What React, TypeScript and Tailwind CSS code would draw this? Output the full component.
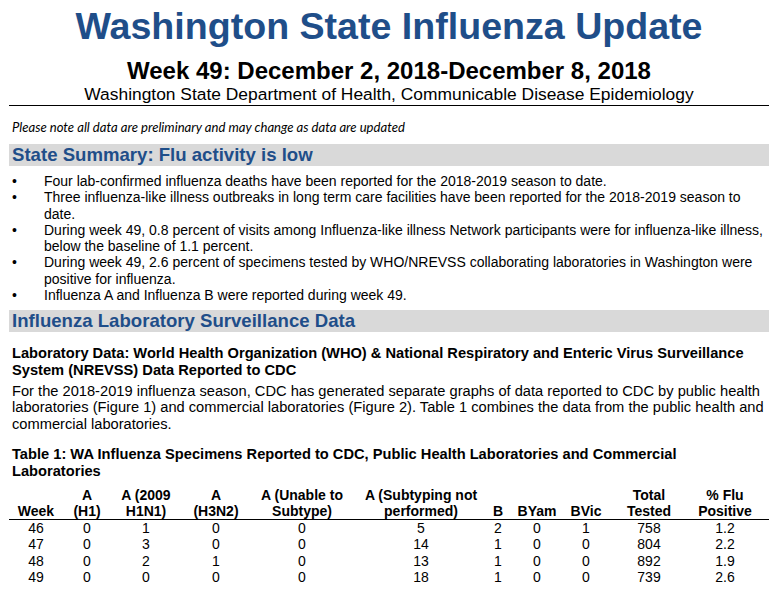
const rows = [
  ['46', '0', '1', '0', '0', '5', '2', '0', '1', '758', '1.2'],
  ['47', '0', '3', '0', '0', '14', '1', '0', '0', '804', '2.2'],
  ['48', '0', '2', '1', '0', '13', '1', '0', '0', '892', '1.9'],
  ['49', '0', '0', '0', '0', '18', '1', '0', '0', '739', '2.6'],
];

const headers = ['Week', 'A\n(H1)', 'A (2009\nH1N1)', 'A\n(H3N2)', 'A (Unable to\nSubtype)', 'A (Subtyping not\nperformed)', 'B', 'BYam', 'BVic', 'Total\nTested', '% Flu\nPositive', ''];
const widths = ['w-[54px]', 'w-[48px]', 'w-[70px]', 'w-[70px]', 'w-[102px]', 'w-[136px]', 'w-[18px]', 'w-[60px]', 'w-[38px]', 'w-[88px]', 'w-[64px]', 'w-[12px]'];

const bullets = [
  'Four lab-confirmed influenza deaths have been reported for the 2018-2019 season to date.',
  'Three influenza-like illness outbreaks in long term care facilities have been reported for the 2018-2019 season to date.',
  'During week 49, 0.8 percent of visits among Influenza-like illness Network participants were for influenza-like illness, below the baseline of 1.1 percent.',
  'During week 49, 2.6 percent of specimens tested by WHO/NREVSS collaborating laboratories in Washington were positive for influenza.',
  'Influenza A and Influenza B were reported during week 49.',
];

function SectionBar({ children }: { children: React.ReactNode }) {
  return (
    <div className="bg-[#d9d9d9] h-[22px] pl-[3px] text-[18.6px] leading-[22px] font-bold text-[#1f4e89]">
      {children}
    </div>
  );
}

export default function App() {
  return (
    <div className="w-[779px] h-[597px] overflow-hidden bg-white text-black pl-[9px] pr-[10px] font-['Liberation_Sans',Arial,sans-serif]">
      {/* header */}
      <h1 className="pt-[4px] text-center text-[37.6px] leading-[45px] font-bold text-[#1f4e89]">
        Washington State Influenza Update
      </h1>
      <h2 className="mt-[9px] text-center text-[24px] leading-[26px] font-bold">
        Week 49: December 2, 2018-December 8, 2018
      </h2>
      <div className="text-center text-[17.4px] leading-[20px] border-b border-black pb-[1px]">
        Washington State Department of Health, Communicable Disease Epidemiology
      </div>

      <p className="mt-[13px] pl-[3px] text-[13.1px] leading-[16px] italic font-['Lato',sans-serif]">
        Please note all data are preliminary and may change as data are updated
      </p>

      <div className="mt-[9px]">
        <SectionBar>State Summary: Flu activity is low</SectionBar>
      </div>

      <ul className="mt-[7px] text-[14px] leading-[16.3px]">
        {bullets.map((b) => (
          <li key={b} className="flex">
            <span className="w-[35px] shrink-0 pl-[3px]">•</span>
            <span>{b}</span>
          </li>
        ))}
      </ul>

      <div className="mt-[7px]">
        <SectionBar>Influenza Laboratory Surveillance Data</SectionBar>
      </div>

      <h3 className="mt-[13px] pl-[3px] text-[14.67px] leading-[16.3px] font-bold">
        Laboratory Data: World Health Organization (WHO) &amp; National Respiratory and Enteric Virus Surveillance System (NREVSS) Data Reported to CDC
      </h3>
      <p className="mt-[5px] pl-[3px] mr-[-10px] text-[14.67px] leading-[16.5px]">
        For the 2018-2019 influenza season, CDC has generated separate graphs of data reported to CDC by public health laboratories (Figure 1) and commercial laboratories (Figure 2). Table 1 combines the data from the public health and commercial laboratories.
      </p>

      <h3 className="mt-[14px] pl-[3px] text-[14.67px] leading-[16.3px] font-bold">
        Table 1: WA Influenza Specimens Reported to CDC, Public Health Laboratories and Commercial
        <br />
        Laboratories
      </h3>

      <table className="mt-[8px] w-[760px] table-fixed border-collapse text-[14px] leading-[16.3px]">
        <thead>
          <tr className="border-b border-black align-bottom">
            {headers.map((h, i) => (
              <th key={i} className={`${widths[i]} p-0 text-center font-bold whitespace-pre-line leading-[16px]`}>
                {h}
              </th>
            ))}
          </tr>
        </thead>
        <tbody>
          {rows.map((r) => (
            <tr key={r[0]}>
              {r.map((c, i) => (
                <td key={i} className="p-0 text-center">
                  {c}
                </td>
              ))}
              <td />
            </tr>
          ))}
        </tbody>
      </table>
    </div>
  );
}
